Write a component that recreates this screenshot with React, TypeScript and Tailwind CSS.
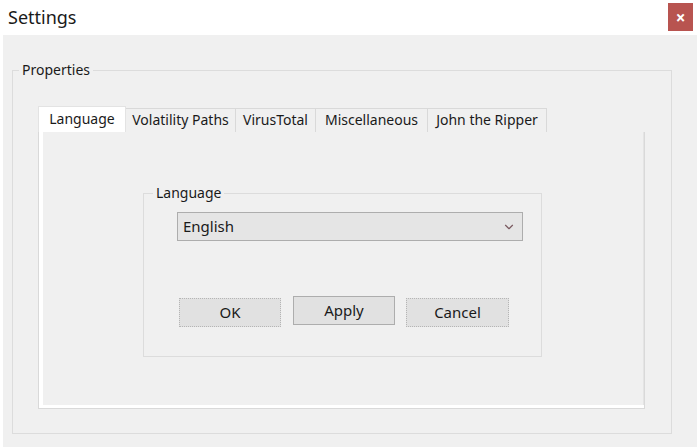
import { ChevronDown } from "lucide-react";

const tabs = [
  { name: "Language", w: "w-[88px]" },
  { name: "Volatility Paths", w: "w-[110px]" },
  { name: "VirusTotal", w: "w-[80px]" },
  { name: "Miscellaneous", w: "w-[112px]" },
  { name: "John the Ripper", w: "w-[119px]" },
];

export default function App() {
  return (
    <div className="w-[699px] h-[447px] bg-white flex flex-col font-['Noto_Sans',sans-serif] text-[#1a1a1a] overflow-hidden">
      {/* title bar */}
      <div className="h-[35px] flex items-start justify-between pl-[8px] pr-[6px]">
        <span className="text-[18px] leading-[18px] mt-[8px]">Settings</span>
        <button className="mt-[3px] w-[25px] h-[28px] bg-[#b85450] text-white flex items-center justify-center text-[17px] font-bold leading-none">
          ×
        </button>
      </div>

      {/* body */}
      <div className="flex-1 ml-[3px] mr-[2px] bg-[#f0f0f0] pt-[35px] px-[9px] pb-[13px] flex">
        <div className="relative flex-1 border border-[#dcdcdc] mr-[16px] pt-[35px] pl-[25px] pr-[26px] pb-[24px] flex flex-col">
          <span className="absolute -top-[10px] left-[6px] px-[3px] bg-[#f0f0f0] text-[14px] leading-[18px]">Properties</span>

          {/* tabs */}
          <div className="flex items-end h-[26px]">
            {tabs.map((t, i) => (
              <div
                key={t.name}
                className={
                  i === 0
                    ? `${t.w} h-[26px] bg-white border border-b-0 border-[#e3e3e3] text-[14px] leading-[24px] text-center`
                    : `${t.w} h-[24px] bg-[#f0f0f0] border border-b-0 border-l-0 border-[#d9d9d9] text-[14px] leading-[22px] text-center whitespace-nowrap`
                }
              >
                {t.name}
              </div>
            ))}
          </div>

          {/* tab panel */}
          <div className="flex-1 border border-[#d9d9d9] border-t-0 bg-white pl-[4px] pb-[3px] flex">
            <div className="flex-1 bg-[#f0f0f0] border-r border-[#e4e4e4] pt-[61px] pl-[100px] pr-[101px] pb-[48px] flex">
              <div className="relative flex-1 border border-[#dcdcdc] pt-[18px] pl-[33px] pr-[18px] flex flex-col">
                <span className="absolute -top-[10px] left-[9px] px-[3px] bg-[#f0f0f0] text-[14px] leading-[18px]">Language</span>

                <div className="h-[29px] bg-[#e5e5e5] border border-[#adadad] flex items-center justify-between pl-[5px] pr-[6px]">
                  <span className="text-[15px]">English</span>
                  <ChevronDown className="w-[14px] h-[14px] text-[#7a5a60]" strokeWidth={2} />
                </div>

                <div className="flex items-start mt-[55px] pl-[2px]">
                  <button className="w-[102px] h-[29px] mt-[2px] bg-[#e1e1e1] border border-[#b5b5b5] border-dotted text-[15px] leading-none">OK</button>
                  <button className="w-[102px] h-[29px] ml-[12px] bg-[#e1e1e1] border border-[#adadad] text-[15px] leading-none">Apply</button>
                  <button className="w-[103px] h-[29px] mt-[2px] ml-[11px] bg-[#e1e1e1] border border-[#b5b5b5] border-dotted text-[15px] leading-none">Cancel</button>
                </div>
              </div>
            </div>
          </div>
        </div>
      </div>
    </div>
  );
}
